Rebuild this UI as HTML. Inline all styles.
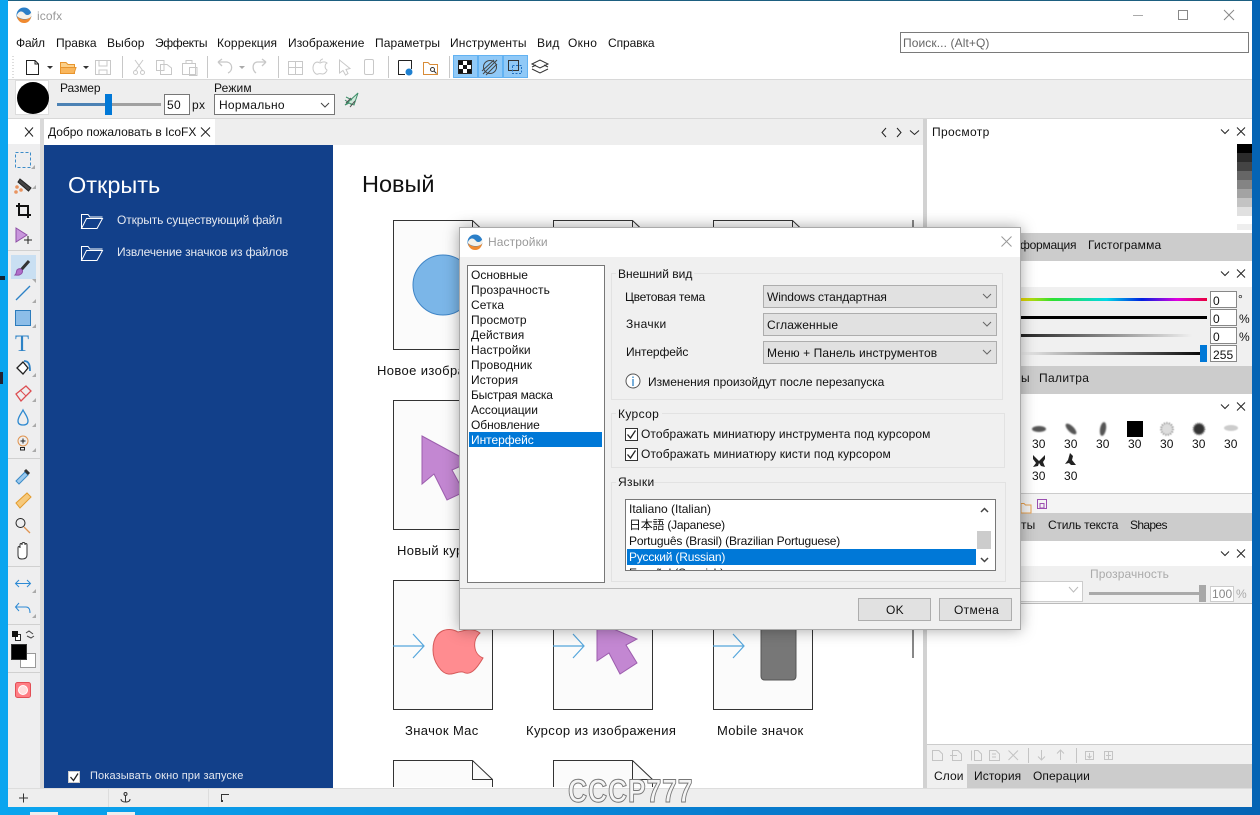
<!DOCTYPE html>
<html><head><meta charset="utf-8"><style>
html,body{margin:0;padding:0;width:1260px;height:815px;overflow:hidden}
body{position:relative;font:12px/14px "Liberation Sans","Noto Sans CJK JP",sans-serif;color:#111;background:#0a8fe0}
.r{position:absolute}
.t{position:absolute;white-space:nowrap;line-height:14px;letter-spacing:.1px}
.w{letter-spacing:.35px}
.l{font-size:13px;letter-spacing:.38px}
svg{position:absolute;left:0;top:0}
</style></head><body>
<div class="r" style="left:0;top:0;width:1260px;height:815px;background:linear-gradient(90deg,#0aa5ef 0,#0a92e2 30%,#0673c6 70%,#0564b4 100%)"></div>
<div class="r" style="left:8px;top:0;width:1244px;height:1px;background:#1d5f80"></div>
<div class="r" style="left:0;top:276px;width:5px;height:4px;background:#123"></div>
<div class="r" style="left:0;top:372px;width:3px;height:12px;background:#223"></div>
<div class="r" style="left:30px;top:812px;width:28px;height:3px;background:#eee"></div>
<div class="r" style="left:107px;top:812px;width:28px;height:3px;background:#eee"></div>
<!-- window -->
<div class="r" style="left:8px;top:1px;width:1244px;height:806px;background:#fff"></div>
<div class="r" style="left:8px;top:79px;width:1244px;height:40px;background:#eee;border-top:1px solid #d8d8d8;border-bottom:1px solid #d8d8d8;box-sizing:border-box"></div>
<div class="r" style="left:8px;top:119px;width:915px;height:26px;background:#eee"></div>
<div class="r" style="left:8px;top:119px;width:32px;height:25px;background:#fff"></div>
<div class="r" style="left:8px;top:144px;width:32px;height:644px;background:#eeeeef"></div>
<div class="r" style="left:40px;top:119px;width:4px;height:669px;background:#d9d9d9"></div>
<div class="r" style="left:44px;top:119px;width:171px;height:26px;background:#fff"></div>
<div class="r" style="left:44px;top:145px;width:289px;height:643px;background:#12408a"></div>
<div class="r" style="left:923px;top:119px;width:4px;height:669px;background:#d2d2d2"></div>
<div class="r" style="left:912px;top:220px;width:2px;height:438px;background:#888"></div>
<!-- statusbar -->
<div class="r" style="left:8px;top:788px;width:1244px;height:19px;background:#eee;border-top:1px solid #ddd;box-sizing:border-box"></div>
<div class="r" style="left:108px;top:789px;width:1px;height:18px;background:#ddd"></div>
<div class="r" style="left:208px;top:789px;width:1px;height:18px;background:#ddd"></div>
<!-- right panels -->
<div class="r" style="left:1237px;top:144px;width:15px;height:86px;background:linear-gradient(#000 0,#000 9px,#2b2b2b 9px,#2b2b2b 18px,#444 18px,#444 27px,#666 27px,#666 36px,#848484 36px,#848484 45px,#a3a3a3 45px,#a3a3a3 54px,#c3c3c3 54px,#c3c3c3 63px,#e0e0e0 63px,#e0e0e0 72px,#fff 72px,#fff 80px,#eee 80px)"></div>
<div class="r" style="left:927px;top:233px;width:325px;height:28px;background:#ccc"></div>
<div class="r" style="left:927px;top:287px;width:325px;height:79px;background:#f0f0f0"></div>
<div class="r" style="left:927px;top:366px;width:325px;height:28px;background:#ccc"></div>
<div class="r" style="left:927px;top:493px;width:325px;height:20px;background:#f4f4f4;border-top:1px solid #ccc;box-sizing:border-box"></div>
<div class="r" style="left:927px;top:513px;width:325px;height:28px;background:#ccc"></div>
<div class="r" style="left:927px;top:566px;width:325px;height:37px;background:#f0f0f0;border-bottom:1px solid #bbb"></div>
<div class="r" style="left:927px;top:744px;width:325px;height:20px;background:#f0f0f0;border-top:1px solid #ccc;box-sizing:border-box"></div>
<div class="r" style="left:927px;top:764px;width:325px;height:24px;background:#ccc"></div>
<div class="r" style="left:927px;top:764px;width:40px;height:24px;background:#f0f0f0"></div>
<!-- sliders -->
<div class="r" style="left:1021px;top:298px;width:186px;height:3px;background:linear-gradient(90deg,#f0d800,#30e030 17%,#00d8e8 46%,#0020e0 65%,#e000e0 84%,#e8003c)"></div>
<div class="r" style="left:1021px;top:316px;width:186px;height:3px;background:#000"></div>
<div class="r" style="left:1021px;top:334px;width:186px;height:3px;background:linear-gradient(90deg,#222,#f0f0f0 92%)"></div>
<div class="r" style="left:1021px;top:352px;width:186px;height:3px;background:linear-gradient(90deg,#eee,#000)"></div>
<div class="r" style="left:1200px;top:345px;width:7px;height:17px;background:#0078d7"></div>
<div class="r" style="left:1210px;top:291px;width:25px;height:15px;background:#fff;border:1px solid #888"></div>
<div class="r" style="left:1210px;top:309px;width:25px;height:15px;background:#fff;border:1px solid #888"></div>
<div class="r" style="left:1210px;top:327px;width:25px;height:15px;background:#fff;border:1px solid #888"></div>
<div class="r" style="left:1210px;top:345px;width:25px;height:15px;background:#fff;border:1px solid #888"></div>
<!-- opacity -->
<div class="r" style="left:1020px;top:581px;width:62px;height:19px;background:#fff;border:1px solid #ccc;border-left:0"></div>
<div class="r" style="left:1089px;top:592px;width:112px;height:3px;background:#aaa"></div>
<div class="r" style="left:1199px;top:585px;width:7px;height:17px;background:#a8a8a8"></div>
<div class="r" style="left:1210px;top:586px;width:22px;height:14px;background:#fff;border:1px solid #ccc"></div>
<!-- search / options inputs -->
<div class="r" style="left:900px;top:32px;width:347px;height:19px;background:#fff;border:1px solid #7a7a7a"></div>
<div class="r" style="left:15px;top:80px;width:34px;height:35px;background:#fff;box-shadow:inset 0 0 0 1px #ddd"></div>
<div class="r" style="left:17px;top:82px;width:32px;height:32px;background:#000;border-radius:50%"></div>
<div class="r" style="left:57px;top:103px;width:104px;height:3px;background:#a0a0a0"></div>
<div class="r" style="left:57px;top:103px;width:50px;height:3px;background:#4c82b4"></div>
<div class="r" style="left:105px;top:94px;width:7px;height:21px;background:#0078d7"></div>
<div class="r" style="left:164px;top:94px;width:24px;height:19px;background:#fff;border:1px solid #777"></div>
<div class="r" style="left:214px;top:94px;width:119px;height:19px;background:#fff;border:1px solid #777"></div>
<!-- toggled buttons -->
<div class="r" style="left:453px;top:55px;width:23px;height:21px;background:#90c9f7;border:1px solid #62b2f2"></div>
<div class="r" style="left:478px;top:55px;width:23px;height:21px;background:#90c9f7;border:1px solid #62b2f2"></div>
<div class="r" style="left:503px;top:55px;width:23px;height:21px;background:#90c9f7;border:1px solid #62b2f2"></div>
<div class="r" style="left:11px;top:255px;width:25px;height:24px;background:#c9dff2"></div>
<!-- cards -->
<svg width="1260" height="815" viewBox="0 0 1260 815" fill="none">
<defs><g id="c"><path d="M.5.5H79.500L99.500 19.500V129.500H.5Z" fill="#fbfbfb" stroke="#333"/><path d="M79.500.5V19.500H99.500" stroke="#333"/></g>
<g id="ar"><path d="M0 66H30M20 54L31 66L20 78" stroke="#55a6dc" stroke-width="1.2"/></g>
<g id="lg"><circle cx="8" cy="8" r="7.5" fill="#2b7fc8"/><path d="M1 9C4 13 12 14 15.400 9C14 15 11 16 8 16C4 16 1.500 13 1 9Z" fill="#f08a30"/><path d="M1 8C3 3 7 4 9 7C11 9 14 8 15.500 5L15.500 9C13 13 5 13 1 9Z" fill="#f4f1ea"/></g></defs>
<use href="#c" x="393" y="220"/><use href="#c" x="553" y="220"/><use href="#c" x="713" y="220"/>
<use href="#c" x="393" y="400"/><use href="#c" x="553" y="400"/><use href="#c" x="713" y="400"/>
<use href="#c" x="393" y="580"/><use href="#c" x="553" y="580"/><use href="#c" x="713" y="580"/>
<path d="M393.500 787V760.500H472.500L492.500 779.500V787H393.500Z" fill="#fbfbfb"/><path d="M393.500 787V760.500H472.500L492.500 779.500V787M472.500 760.500V779.500H492.500" stroke="#333"/>
<path d="M553.500 787V760.500H632.500L652.500 779.500V787H553.500Z" fill="#fbfbfb"/><path d="M553.500 787V760.500H632.500L652.500 779.500V787M632.500 760.500V779.500H652.500" stroke="#333"/>
<circle cx="443" cy="285" r="30" fill="#7bb6e8" stroke="#3f85c6"/>
<path d="M422 436L470 462L452 470L464 492L447 500L434 474L422 484Z" fill="#c387d2" stroke="#9d5eae"/>
<use href="#ar" x="393" y="580"/><use href="#ar" x="553" y="580"/><use href="#ar" x="713" y="580"/>
<path d="M458 632C448 626 433 630 433 650C433 662 442 675 450 674C455 674 458 671 463 672C470 676 476 670 483 658C473 654 472 640 480 633C472 627 463 631 458 632Z" fill="#ff8c90" stroke="#d65a5a"/>
<path d="M597 622L637 639L626 645L637 663L620 674L609 653L597 661Z" fill="#c387d2" stroke="#9d5eae"/>
<path d="M761 620H796V676Q796 680 792 680H765Q761 680 761 676Z" fill="#777" stroke="#555"/>
<!-- title -->
<use href="#lg" x="16" y="7"/>
<path d="M1133 15.500H1143" stroke="#aaa"/><rect x="1178.500" y="10.500" width="9" height="9" stroke="#888"/><path d="M1224 10L1234 20M1234 10L1224 20" stroke="#888"/>
<!-- toolbar -->
<path d="M13 56V78" stroke="#bbb" stroke-dasharray="1 2"/>
<path d="M26.500 60.500H35L38.500 64V74.500H26.500ZM35 60.500V64H38.500" stroke="#222" fill="#fff"/>
<path d="M47 66H53L50 69ZM83 66H89L86 69Z" fill="#333"/><path d="M239 66H245L242 69Z" fill="#aaa"/>
<path d="M60.500 62.500H66L68 64.500H74.500V73.500H60.500Z" fill="#fbd08a" stroke="#e8952e"/><path d="M60.500 67.500H76L74 73.500H60.500Z" fill="#f9b65c" stroke="#e8952e"/>
<g stroke="#c8c8c8"><path d="M95.500 60.500H110.500V74.500H95.500ZM99 60.500V66H107V60.500M99 74.500V70H107V74.500"/>
<path d="M122.500 56V78M207.500 56V78M278.500 56V78M388.500 56V78M449.500 56V78"/>
<path d="M135 60L143 71M143 60L135 71"/><circle cx="135.500" cy="72.500" r="2"/><circle cx="142.500" cy="72.500" r="2"/>
<path d="M156.500 60.500H164V70.500H156.500ZM160.500 64.500H167L171.500 68V74.500H160.500Z" fill="#fff"/>
<path d="M182.500 63.500H195.500V74.500H182.500ZM186 63V60.500H192V63M189.500 67.500H197V75.500H189.500Z" fill="#fff"/>
<path d="M218 62L222 59M218 62L222 66M218 62H227C233 63 233 71 228 73M266 62L262 59M266 62L262 66M266 62H257C252 63 252 70 256 73" stroke-width="1.300"/>
<path d="M288.500 61.500H302.500V74.500H288.500ZM295.500 61.500V74.500M288.500 67.500H302.500"/>
<path d="M320 63C315 60 313 65 313 68C313 72 316 75 318 74C320 73 322 74 323 74C325 74 327 71 327 70C324 68 325 64 327 63C325 61 322 62 320 63ZM320 62C320 60 322 59 323 59"/>
<path d="M339.500 60V73L343 70.500L345.500 75L348 73.500L346 69.500L350 68.500Z"/>
<rect x="364.500" y="59.500" width="9" height="15" rx="1.500"/></g>
<path d="M398.500 60.500H411.500V69M398.500 60.500V74.500H405" stroke="#222"/><circle cx="409" cy="72" r="3.500" fill="#1f80d0"/>
<path d="M423.500 62.500H428L430 64.500H437.500V74.500H423.500Z" stroke="#d88b36"/><circle cx="432.500" cy="69.500" r="2" stroke="#333"/><path d="M434 71L436.500 73.500" stroke="#333"/>
<!-- toggled icons -->
<rect x="458.500" y="60.500" width="13" height="13" fill="#fff" stroke="#222"/><path d="M459 61h4v4h-4zM467 61h4v4h-4zM463 65h4v4h-4zM459 69h4v4h-4zM467 69h4v4h-4z" fill="#111"/>
<circle cx="490" cy="67" r="6.500" stroke="#444"/><path d="M483 74L497 60M486 75L497 64M482 71L494 60" stroke="#444"/>
<path d="M508.500 60.500H518.500V70.500H508.500Z" stroke="#333"/><path d="M512.500 65.500H521.500V73.500H512.500Z" stroke="#1f6fc0" stroke-dasharray="2 1.500"/>
<path d="M532 64L540 60L548 64L540 68ZM532 69L540 73L548 69M532 67L536 65M548 67L544 65" stroke="#333" fill="#fff"/>
<!-- pen -->
<path d="M345 105L358 93L354 105L349 103ZM346 97L352 100M345 100L352 105" stroke="#3f8f6a" fill="#cfe8da"/>
<path d="M346 103L351 98M350 107L355 101" stroke="#555"/>
<path d="M321 103L325 107L329 103" stroke="#444"/>
<!-- chevrons -->
<path d="M201 127.500L210 136.500M210 127.500L201 136.500M25 127.500L33 136.500M33 127.500L25 136.500" stroke="#222"/>
<path d="M886 128L882 132.500L886 137M897 128L901 132.500L897 137M910 130.500L914.500 134.500L919 130.500" stroke="#222"/>
<g stroke="#222"><path d="M1221 129.500L1225 133.500L1229 129.500M1237 127.500L1245 135.500M1245 127.500L1237 135.500"/>
<path d="M1221 271.500L1225 275.500L1229 271.500M1237 269.500L1245 277.500M1245 269.500L1237 277.500"/>
<path d="M1221 404.500L1225 408.500L1229 404.500M1237 402.500L1245 410.500M1245 402.500L1237 410.500"/>
<path d="M1221 551.500L1225 555.500L1229 551.500M1237 549.500L1245 557.500M1245 549.500L1237 557.500"/></g>
<path d="M1069 587L1073.500 592L1078 587" stroke="#bbb"/>
<!-- left tools -->
<rect x="15.500" y="152.500" width="15" height="15" stroke="#3c8cc8" stroke-dasharray="3 2"/>
<path d="M20 179L31 188L28.500 191L18 182Z" fill="#444" stroke="#222"/><circle cx="17" cy="187" r="1.800" fill="#e99460"/><circle cx="21" cy="190" r="1.800" fill="#e99460"/><circle cx="16" cy="192" r="1.800" fill="#e99460"/>
<path d="M19 203V215H31M16 206H28V218" stroke="#111" stroke-width="2"/>
<path d="M16 228V242L27 235Z" fill="#c896dc" stroke="#8e4fa6"/><path d="M28 236V244M24 240H32" stroke="#222"/>
<path d="M29 261L21 270" stroke="#333" stroke-width="3"/><path d="M17 270C20 267 24 270 22 273C20 276 17 275 15 275C17 273 16 272 17 270Z" fill="#b06fca" stroke="#8e4fa6"/>
<path d="M16 300L30 286" stroke="#2d82c6" stroke-width="1.300"/>
<rect x="15.500" y="310.500" width="15" height="15" fill="#8cbde8" stroke="#2d7cbc"/>
<text x="15" y="351" font-family="Liberation Serif" font-size="23" fill="#2d82c6">T</text>
<path d="M17 368L23 362L28 368L23 374Z" fill="#fff" stroke="#222" stroke-width="1.300"/><path d="M24 361C29 361 30 365 30 371" stroke="#2d82c6" stroke-width="1.800"/>
<path d="M16 394L26 386L31 391L21 401Z" stroke="#dd4e52" stroke-width="1.300"/><path d="M20 390L26 396" stroke="#dd4e52"/>
<path d="M23 410C21 414 18 417 18 421C18 424 20 425 23 425C26 425 28 424 28 421C28 417 25 414 23 410Z" stroke="#2f8ad0" stroke-width="1.300"/>
<circle cx="23" cy="441" r="5" stroke="#e09450"/><path d="M20.500 441H25.500M23 438.500V443.500" stroke="#222"/><rect x="20.500" y="447.500" width="4" height="2.500" stroke="#222"/>
<path d="M16 481L25 472L28 475L19 484Z" fill="#9cc9ee" stroke="#3c8cc8"/><path d="M25 470L29 474" stroke="#333" stroke-width="3"/>
<path d="M16 503L27 493L31 497L20 508Z" fill="#f6c97c" stroke="#e39c2e"/>
<circle cx="20.500" cy="523" r="4.500" stroke="#222"/><path d="M24 527L30 533" stroke="#e09450" stroke-width="1.300"/>
<path d="M18 555V548C18 546 20 546 20 548V545C20 543 22 543 22 545V544C22 542 25 542 25 544V545C25 543 27 543 27 545V555C27 558 25 559 22 559C19 559 18 558 18 555Z" fill="#fff" stroke="#333"/>
<path d="M16 583.500H30M19 580L15.500 583.500L19 587M27 580L30.500 583.500L27 587" stroke="#2d8ad4"/>
<path d="M16 607H26C29 607 30 610 30 613M19 603L15.500 607L19 611" stroke="#2d8ad4"/>
<g stroke="#2a2a2a"><rect x="15.500" y="634.500" width="5" height="6" fill="#fff"/></g><rect x="12" y="631" width="6" height="6" fill="#111"/>
<path d="M26 633L29 631L33 634M34 636L31 638L27 636" stroke="#444"/>
<rect x="20.500" y="653.500" width="15" height="14" fill="#fff" stroke="#999"/><rect x="11.500" y="644.500" width="15" height="15" fill="#000" stroke="#333"/>
<rect x="15.500" y="682.500" width="15" height="15" rx="2" fill="#ff7d84" stroke="#e24f56"/><circle cx="23" cy="690" r="4.500" fill="#ffdcdc" stroke="#fff"/>
<g stroke="#d0d0d0"><path d="M8 250.500H40M8 458.500H40M8 566.500H40M8 624.500H40M8 672.500H40"/></g>
<path d="M31 169H35V165ZM36 189H32L36 185ZM36 283L32 279H36ZM36 303H32L36 299ZM36 328H32L36 324ZM36 377H32L36 373ZM36 402H32L36 398ZM36 427H32L36 423ZM36 452H32L36 448ZM36 593H32L36 589ZM36 618H32L36 614Z" fill="#aaa"/>
<!-- folders -->
<path d="M81.500 228.500V214.500H88L90 217H102.500M81.500 228.500H97L102.500 218.500H86.500L81.500 228.500Z" stroke="#fff"/>
<path d="M81.500 260.500V246.500H88L90 249H102.500M81.500 260.500H97L102.500 250.500H86.500L81.500 260.500Z" stroke="#fff"/>
<rect x="68.500" y="771.500" width="11" height="11" fill="#fff" stroke="#ccc"/><path d="M70.500 777L73.500 780.500L78 773.500" stroke="#222" stroke-width="1.300"/>
<!-- status -->
<path d="M19 798H28M23.500 793.500V802.500" stroke="#333"/>
<circle cx="125.500" cy="794" r="1.500" stroke="#333"/><path d="M125.500 795.500V802M121 799C121 802 124 802 125.500 802C127 802 130 802 130 799" stroke="#333"/>
<path d="M221.500 801V794.500H229" stroke="#333"/><rect x="221" y="800" width="2" height="2" fill="#333"/>
<!-- brushes -->
<g fill="#555" style="filter:blur(.7px)"><ellipse cx="1039" cy="429" rx="7" ry="3"/><ellipse cx="1071" cy="429" rx="7" ry="3" transform="rotate(45 1071 429)"/><ellipse cx="1103" cy="429" rx="3" ry="7" transform="rotate(10 1103 429)"/></g>
<rect x="1127" y="421" width="16" height="16" fill="#000"/>
<g style="filter:blur(.5px)"><circle cx="1167" cy="429" r="6" fill="#ddd" stroke="#888" stroke-dasharray="1 1.500" stroke-width="2"/><circle cx="1199" cy="429" r="5.500" fill="#333" stroke="#777" stroke-dasharray="1 1" stroke-width="2"/><ellipse cx="1231" cy="428" rx="7" ry="3" fill="#ccc"/></g>
<path d="M1039 461L1033 455V459L1036 463L1033 467L1038 466L1039 463L1041 466L1045 467L1043 462L1045 459V455Z" fill="#222"/>
<path d="M1070 453L1073 456L1072 460L1076 465H1071L1069 463L1065 464L1068 460Z" fill="#222"/>
<path d="M1021 503.500H1024L1025.500 505H1031V513H1021Z" stroke="#e8a04c"/>
<path d="M1037.500 499.500H1046.500V508.500H1037.500ZM1040 503.500H1044V508H1040Z" stroke="#9b4fb0"/>
<!-- bottom toolbar -->
<g stroke="#c4c4c4"><path d="M932.500 750.500H939L942.500 754V760.500H932.500Z"/><path d="M952.500 750.500H958L961.500 754V760.500H952.500ZM950 755.500H957"/><path d="M971.500 750.500V760.500M974.500 750.500H978L981.500 754V760.500H974.500Z"/><path d="M989.500 750.500H996L999.500 754V760.500H989.500ZM992 754H996M992 757H996"/><path d="M1008.500 750.500L1018 760M1018 750.500L1008.500 760"/><path d="M1028.500 748V763M1076.500 748V763"/><path d="M1041.500 750V760M1038 756.500L1041.500 760L1045 756.500M1060.500 750V760M1057 753.500L1060.500 750L1064 753.500"/><rect x="1085.500" y="751.500" width="8" height="8"/><rect x="1104.500" y="751.500" width="8" height="8"/><path d="M1089.500 753V758M1087.500 756L1089.500 758L1091.500 756M1108.500 752V759M1106 755.500H1111"/></g>
</svg>
<!-- main texts -->
<span class="t" style="left:37px;top:9px;color:#9a9a9a">icofx</span>
<span class="t" style="left:16px;top:36px;letter-spacing:-.15px">Файл</span><span class="t" style="left:56px;top:36px;letter-spacing:0">Правка</span><span class="t" style="left:107px;top:36px;letter-spacing:.15px">Выбор</span><span class="t" style="left:155px;top:36px;letter-spacing:-.35px">Эффекты</span><span class="t" style="left:217px;top:36px;letter-spacing:.13px">Коррекция</span><span class="t" style="left:288px;top:36px;letter-spacing:.08px">Изображение</span><span class="t" style="left:375px;top:36px;letter-spacing:.13px">Параметры</span><span class="t" style="left:450px;top:36px;letter-spacing:.17px">Инструменты</span><span class="t w" style="left:537px;top:36px">Вид</span><span class="t w" style="left:568px;top:36px">Окно</span><span class="t" style="left:608px;top:36px;letter-spacing:-.08px">Справка</span>
<span class="t" style="left:903px;top:36px;color:#666">Поиск... (Alt+Q)</span>
<span class="t" style="left:60px;top:81px;letter-spacing:-.15px">Размер</span><span class="t w" style="left:167px;top:98px">50</span><span class="t w" style="left:192px;top:98px">px</span><span class="t" style="left:214px;top:81px;letter-spacing:.15px">Режим</span><span class="t" style="left:219px;top:98px;letter-spacing:.25px">Нормально</span>
<span class="t" style="left:48px;top:125px;letter-spacing:-.02px">Добро пожаловать в IcoFX</span>
<span class="t" style="left:68px;top:172px;font-size:23.5px;line-height:26px;color:#fff;letter-spacing:0">Открыть</span>
<span class="t" style="left:117px;top:213px;color:#e4e8f0;letter-spacing:-.13px">Открыть существующий файл</span>
<span class="t" style="left:117px;top:245px;color:#e4e8f0;letter-spacing:-.15px">Извлечение значков из файлов</span>
<span class="t" style="left:90px;top:769px;color:#e4e8f0;font-size:11px;letter-spacing:.13px">Показывать окно при запуске</span>
<span class="t" style="left:362px;top:171px;font-size:23.5px;line-height:26px;letter-spacing:0">Новый</span>
<span class="t l" style="left:377px;top:364px">Новое изображение</span><span class="t l" style="left:397px;top:544px">Новый курсор</span>
<span class="t l" style="left:405px;top:724px">Значок Mac</span><span class="t l" style="left:526px;top:724px">Курсор из изображения</span><span class="t l" style="left:717px;top:724px">Mobile значок</span>
<span class="t w" style="left:932px;top:125px">Просмотр</span>
<span class="t" style="left:1020px;top:238px;letter-spacing:-.25px">формация</span><span class="t" style="left:1088px;top:238px;letter-spacing:.17px">Гистограмма</span>
<span class="t" style="left:1021px;top:371px">ы</span><span class="t w" style="left:1039px;top:371px">Палитра</span>
<span class="t" style="left:1021px;top:518px">ты</span><span class="t" style="left:1048px;top:518px;letter-spacing:-.23px">Стиль текста</span><span class="t" style="left:1130px;top:518px;letter-spacing:-.65px">Shapes</span>
<span class="t" style="left:1090px;top:567px;color:#aaa">Прозрачность</span>
<span class="t" style="left:1212px;top:587px;color:#888">100</span><span class="t" style="left:1236px;top:587px;color:#aaa">%</span>
<span class="t" style="left:934px;top:769px">Слои</span><span class="t" style="left:974px;top:769px">История</span><span class="t" style="left:1033px;top:769px">Операции</span>
<span class="t" style="left:1213px;top:294px">0</span><span class="t" style="left:1213px;top:312px">0</span><span class="t" style="left:1213px;top:330px">0</span><span class="t" style="left:1213px;top:348px">255</span>
<span class="t" style="left:1238px;top:292px">°</span><span class="t" style="left:1239px;top:312px">%</span><span class="t" style="left:1239px;top:330px">%</span>
<span class="t" style="left:1032px;top:437px">30</span><span class="t" style="left:1064px;top:437px">30</span><span class="t" style="left:1096px;top:437px">30</span><span class="t" style="left:1128px;top:437px">30</span><span class="t" style="left:1160px;top:437px">30</span><span class="t" style="left:1192px;top:437px">30</span><span class="t" style="left:1224px;top:437px">30</span><span class="t" style="left:1032px;top:469px">30</span><span class="t" style="left:1064px;top:469px">30</span>
<span class="t" style="left:568px;top:775px;font:bold 32px/32px 'Liberation Sans',sans-serif;color:#f4f4f4;-webkit-text-stroke:1px #777;letter-spacing:1px;transform-origin:0 0;transform:scaleX(.83)">CCCP777</span>
<!-- dialog -->
<div class="r" style="left:459px;top:227px;width:562px;height:403px;background:#f0f0f0;box-shadow:0 0 14px rgba(0,0,0,.35);border:1px solid #aaa;box-sizing:border-box"></div>
<div class="r" style="left:460px;top:228px;width:560px;height:29px;background:#fff"></div>
<div class="r" style="left:460px;top:588px;width:560px;height:1px;background:#bbb"></div>
<div class="r" style="left:467px;top:265px;width:136px;height:316px;background:#fff;border:1px solid #777"></div>
<div class="r" style="left:469px;top:432px;width:133px;height:15px;background:#0078d7"></div>
<div class="r" style="left:611px;top:273px;width:390px;height:125px;border:1px solid #e2e2e2"></div>
<div class="r" style="left:611px;top:413px;width:392px;height:53px;border:1px solid #e2e2e2"></div>
<div class="r" style="left:611px;top:482px;width:393px;height:98px;border:1px solid #e2e2e2"></div>
<div class="r" style="left:616px;top:268px;width:78px;height:10px;background:#f0f0f0"></div>
<div class="r" style="left:616px;top:408px;width:46px;height:10px;background:#f0f0f0"></div>
<div class="r" style="left:616px;top:477px;width:38px;height:10px;background:#f0f0f0"></div>
<div class="r" style="left:763px;top:285px;width:232px;height:21px;background:#e1e1e1;border:1px solid #adadad"></div>
<div class="r" style="left:763px;top:313px;width:232px;height:21px;background:#e1e1e1;border:1px solid #adadad"></div>
<div class="r" style="left:763px;top:341px;width:232px;height:21px;background:#e1e1e1;border:1px solid #adadad"></div>
<div class="r" style="left:625px;top:499px;width:369px;height:70px;background:#fff;border:1px solid #777;overflow:hidden">
<div class="r" style="left:1px;top:49px;width:349px;height:16px;background:#0078d7"></div>
<div class="r" style="left:351px;top:31px;width:14px;height:18px;background:#ccc"></div>
<span class="t" style="left:3px;top:2px;letter-spacing:0">Italiano (Italian)</span><span class="t" style="left:3px;top:18px;letter-spacing:-.25px">日本語 (Japanese)</span><span class="t" style="left:3px;top:34px;letter-spacing:-.17px">Português (Brasil) (Brazilian Portuguese)</span><span class="t" style="left:3px;top:50px;color:#fff;letter-spacing:-.18px">Русский (Russian)</span><span class="t" style="left:3px;top:66px;letter-spacing:-.18px">Español (Spanish)</span>
</div>
<div class="r" style="left:858px;top:598px;width:71px;height:21px;background:#e1e1e1;border:1px solid #adadad"></div>
<div class="r" style="left:939px;top:598px;width:71px;height:21px;background:#e1e1e1;border:1px solid #adadad"></div>
<svg width="1260" height="815" viewBox="0 0 1260 815" fill="none">
<use href="#lg" x="467" y="234"/>
<path d="M1001.500 236.500L1011.500 246.500M1011.500 236.500L1001.500 246.500" stroke="#999"/>
<path d="M983 294L987 298L991 294M983 322L987 326L991 322M983 350L987 354L991 350" stroke="#666"/>
<circle cx="633" cy="381" r="7" stroke="#555" fill="#fff"/><path d="M633 379V386M633 376.500V378" stroke="#2d82c6" stroke-width="1.300"/>
<rect x="625.500" y="428.500" width="12" height="12" fill="#fff" stroke="#333"/><path d="M627.500 434.500L630.500 438L635.500 430.500" stroke="#222" stroke-width="1.300"/>
<rect x="625.500" y="448.500" width="12" height="12" fill="#fff" stroke="#333"/><path d="M627.500 454.500L630.500 458L635.500 450.500" stroke="#222" stroke-width="1.300"/>
<path d="M981 512L984.500 508.500L988 512M981 558L984.500 561.500L988 558" stroke="#444" stroke-width="1.500"/>
</svg>
<span class="t" style="left:488px;top:235px;color:#999">Настройки</span>
<span class="t" style="left:471px;top:268px;letter-spacing:0">Основные</span><span class="t" style="left:471px;top:283px">Прозрачность</span><span class="t" style="left:471px;top:298px">Сетка</span><span class="t" style="left:471px;top:313px">Просмотр</span><span class="t" style="left:471px;top:328px">Действия</span><span class="t" style="left:471px;top:343px">Настройки</span><span class="t" style="left:471px;top:358px">Проводник</span><span class="t" style="left:471px;top:373px">История</span><span class="t" style="left:471px;top:388px;letter-spacing:-.2px">Быстрая маска</span><span class="t" style="left:471px;top:403px;letter-spacing:-.05px">Ассоциации</span><span class="t" style="left:471px;top:418px;letter-spacing:-.05px">Обновление</span><span class="t" style="left:471px;top:433px;color:#fff;letter-spacing:-.05px">Интерфейс</span>
<span class="t" style="left:618px;top:267px;letter-spacing:0">Внешний вид</span><span class="t" style="left:625px;top:290px;letter-spacing:-.25px">Цветовая тема</span><span class="t w" style="left:626px;top:317px">Значки</span><span class="t" style="left:626px;top:345px;letter-spacing:-.1px">Интерфейс</span>
<span class="t" style="left:767px;top:290px;letter-spacing:-.12px">Windows стандартная</span><span class="t" style="left:767px;top:318px;letter-spacing:.15px">Сглаженные</span><span class="t" style="left:767px;top:346px;letter-spacing:.08px">Меню + Панель инструментов</span>
<span class="t" style="left:648px;top:375px;letter-spacing:-.04px">Изменения произойдут после перезапуска</span>
<span class="t w" style="left:618px;top:407px">Курсор</span><span class="t" style="left:641px;top:427px;letter-spacing:.08px">Отображать миниатюру инструмента под курсором</span><span class="t" style="left:641px;top:447px;letter-spacing:.12px">Отображать миниатюру кисти под курсором</span>
<span class="t w" style="left:618px;top:475px">Языки</span>
<span class="t w" style="left:886px;top:603px">OK</span><span class="t w" style="left:954px;top:603px">Отмена</span>
</body></html>
